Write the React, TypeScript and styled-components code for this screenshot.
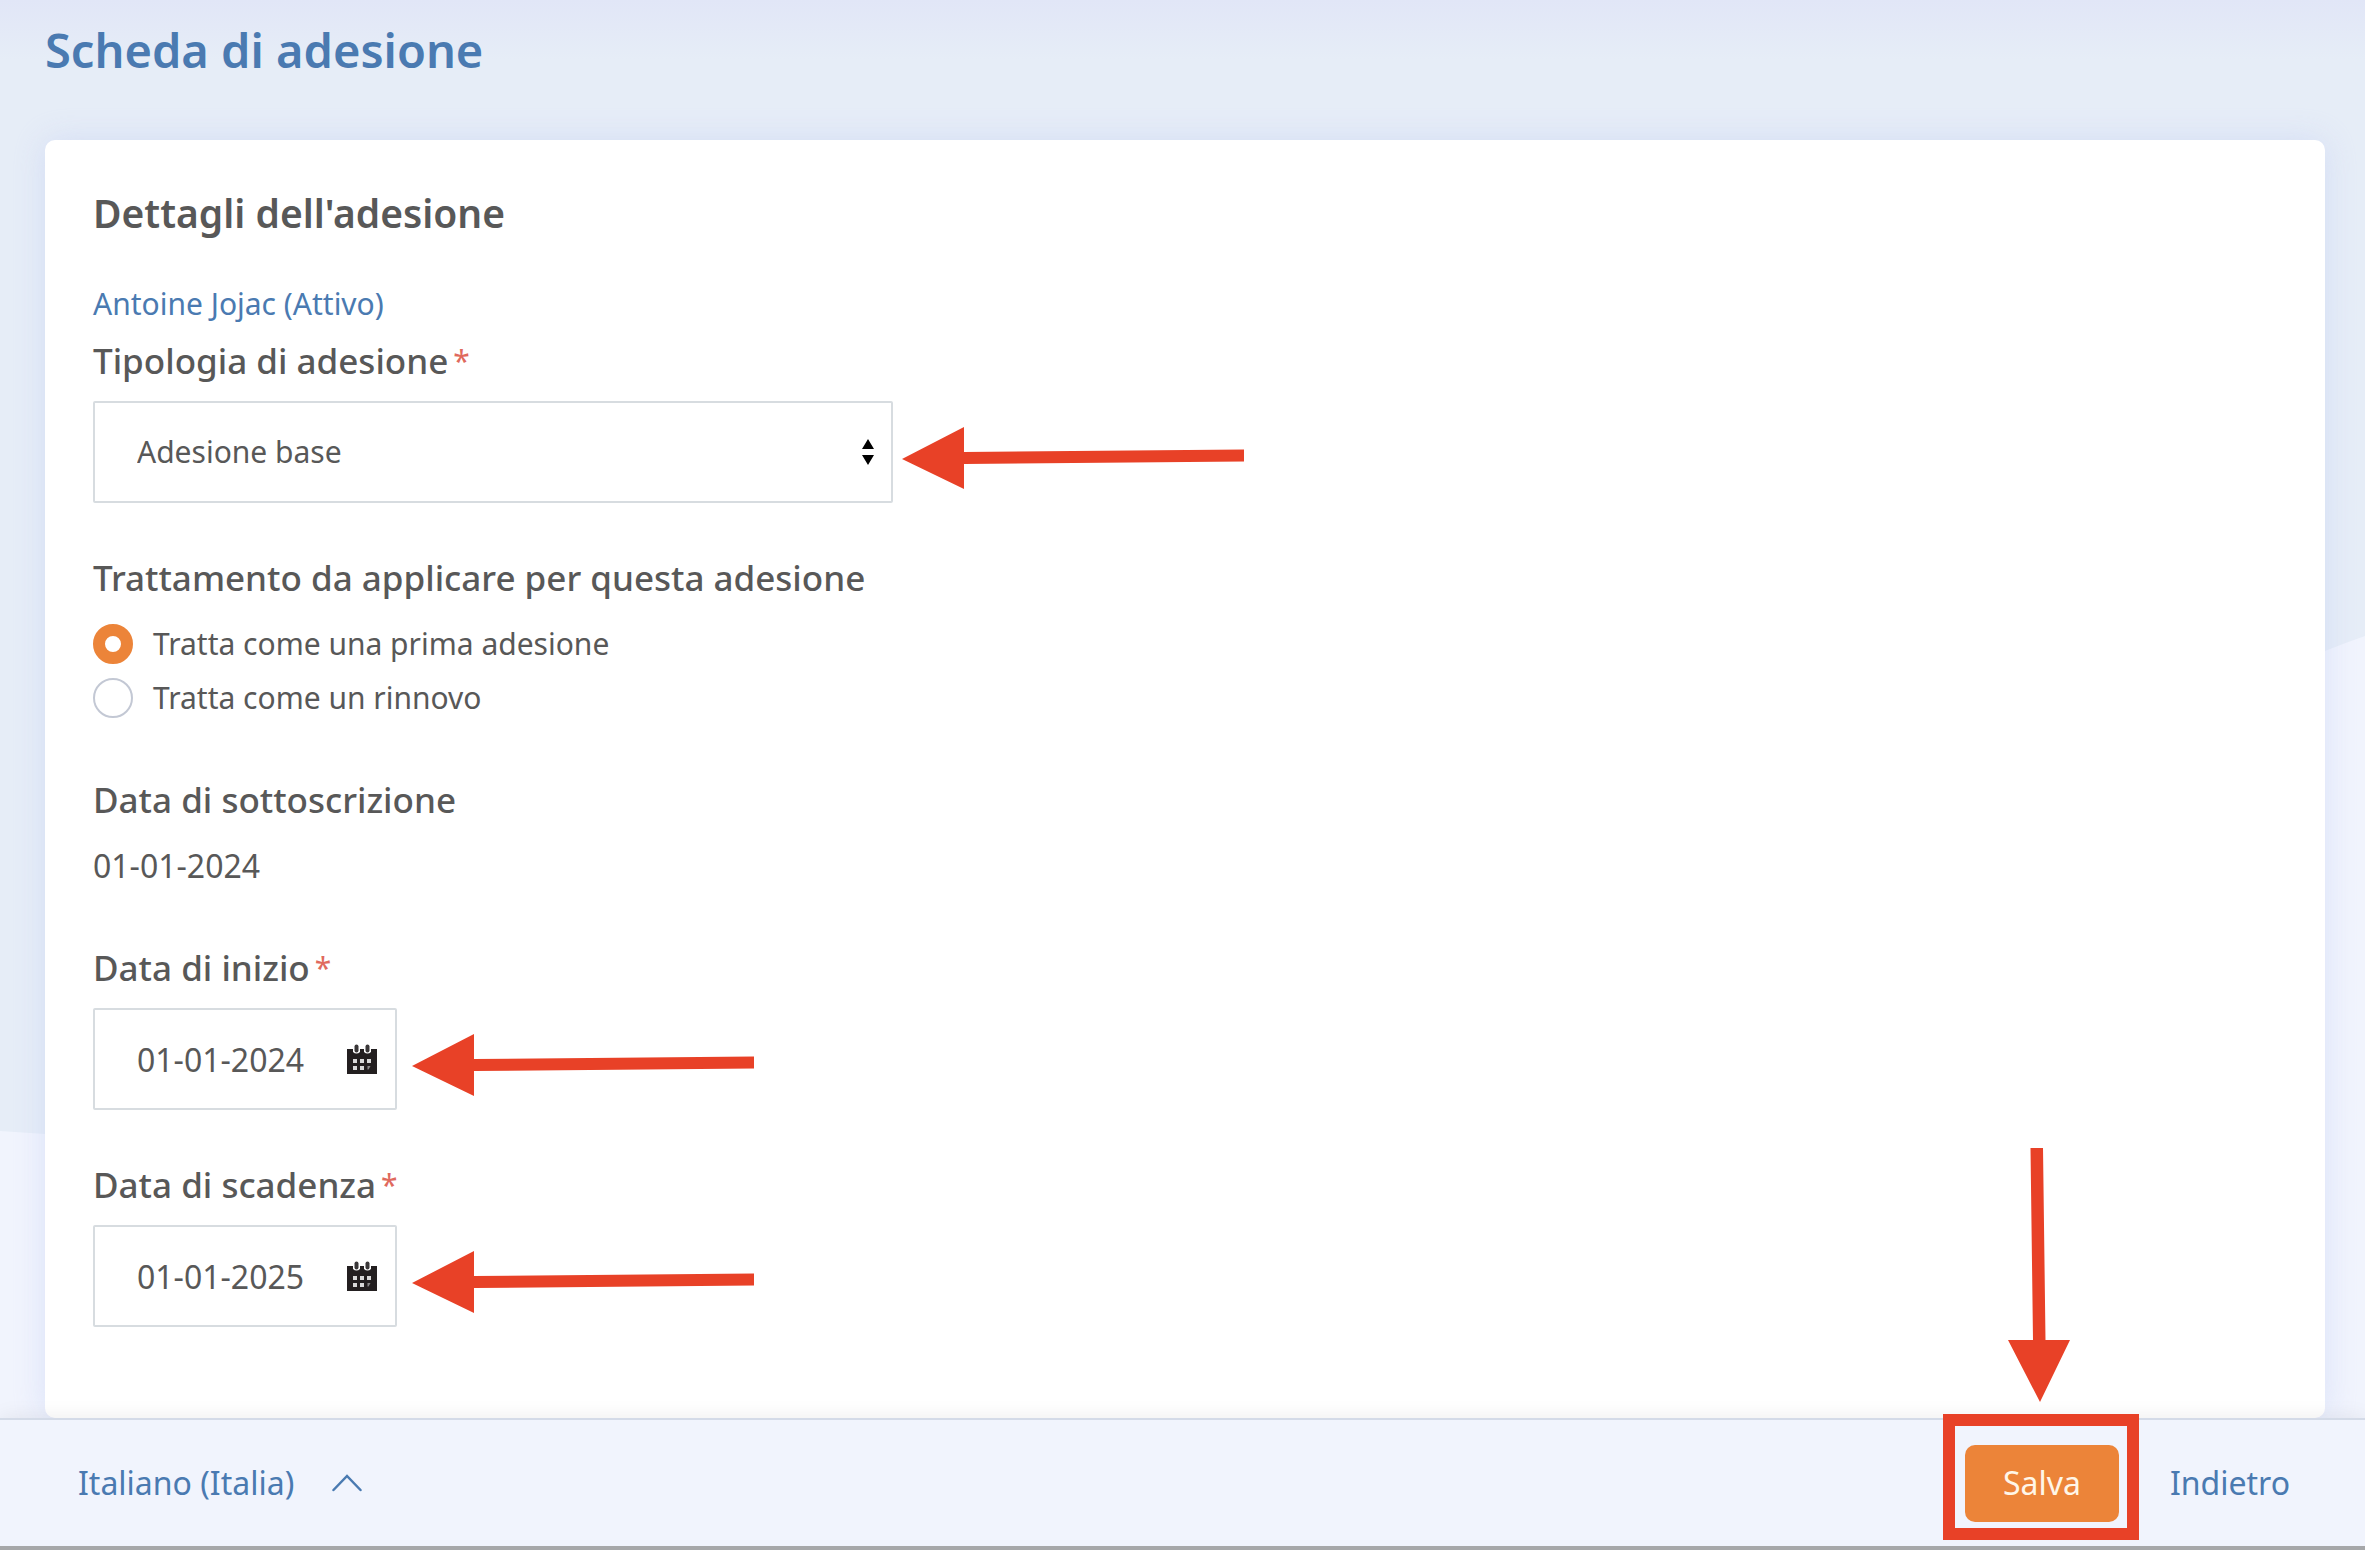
import React, { useState } from 'react';
import styled, { createGlobalStyle } from 'styled-components';

const GlobalStyle = createGlobalStyle`
  *, *::before, *::after { box-sizing: border-box; }
  body {
    margin: 0;
    background: #f1f4fd;
    color: #585858;
    font-family: "Noto Sans", "Open Sans", sans-serif;
    font-size: 30px;
    line-height: 40px;
  }
  button, input, select { font: inherit; color: inherit; }
`;

const Page = styled.div`
  position: relative;
  isolation: isolate;
  display: flex;
  flex-direction: column;
  min-height: 100vh;
`;

const Backdrop = styled.svg`
  position: absolute;
  inset: 0;
  z-index: -1;
  width: 100%;
  height: 100%;
`;

const PageHeader = styled.header`
  padding: 20px 45px 60px;
  background: linear-gradient(#e1e6f7, rgba(225, 230, 247, 0) 60px);
`;

const PageTitle = styled.h1`
  margin: 0;
  font-size: 47px;
  line-height: 60px;
  font-weight: 600;
  color: #4a7ab1;
`;

const Main = styled.main`
  display: flex;
  flex: 1;
  padding: 0 40px 0 45px;
`;

const Card = styled.form`
  flex: 1;
  padding: 49px 48px 80px;
  border-radius: 10px;
  background: #ffffff;
  box-shadow: 0 0 32px rgba(190, 202, 245, 0.45);
`;

const CardTitle = styled.h2`
  margin: 0 0 47px;
  font-size: 39px;
  line-height: 48px;
  font-weight: 600;
`;

const TextLink = styled.a`
  color: #4a7ab1;
  text-decoration: none;
`;

const Fields = styled.div`
  display: flex;
  flex-direction: column;
  gap: 53px;
  margin-top: 15px;
`;

const Field = styled.div`
  display: flex;
  flex-direction: column;
  align-items: flex-start;
  gap: 18px;
`;

const Group = styled.div`
  display: flex;
  flex-direction: column;
  gap: 24px;
  padding-bottom: 7px;
`;

const Label = styled.label`
  font-size: 35px;
  line-height: 44px;
  font-weight: 500;
`;

const GroupLabel = styled.div`
  font-size: 35px;
  line-height: 44px;
  font-weight: 500;
`;

const Required = styled.span`
  margin-left: 5px;
  vertical-align: 2px;
  font-size: 30px;
  line-height: 30px;
  font-weight: 400;
  color: #e0695d;
`;

const ControlRow = styled.div`
  display: flex;
  align-items: center;
  gap: 9px;
  max-width: 100%;
`;

const DateRow = styled(ControlRow)`
  gap: 15px;
`;

const Control = styled.div<{ $width: number }>`
  display: flex;
  align-items: center;
  position: relative;
  width: ${({ $width }) => $width}px;
  height: 102px;
  border: 2px solid #d7dce0;
  border-radius: 2px;
  background: #ffffff;
`;

const Select = styled.select`
  appearance: none;
  width: 100%;
  height: 100%;
  padding: 0 60px 0 42px;
  border: 0;
  background: transparent;
`;

const SelectArrows = styled.svg`
  position: absolute;
  right: 17px;
  width: 12px;
  height: 26px;
  pointer-events: none;
`;

const DateValue = styled.div`
  font-size: 32px;
`;

const DateInput = styled.input`
  flex: 1;
  min-width: 0;
  height: 100%;
  padding: 0 0 0 42px;
  border: 0;
  background: transparent;
  font-size: 32px;
`;

const CalendarButton = styled.button`
  display: flex;
  margin-right: 18px;
  padding: 0;
  border: 0;
  background: transparent;
`;

const Options = styled.div`
  display: flex;
  flex-direction: column;
  gap: 14px;
`;

const Option = styled.label`
  display: flex;
  align-items: center;
  gap: 20px;
`;

const Radio = styled.input`
  appearance: none;
  width: 40px;
  height: 40px;
  margin: 0;
  border: 2px solid #c3c8d4;
  border-radius: 50%;
  background: #ffffff;

  &:checked { border: 12px solid #ec8439; }
`;

const Pointer = styled.svg`
  margin-top: 12px;
`;

const Footer = styled.footer`
  position: sticky;
  bottom: 0;
  display: flex;
  align-items: center;
  justify-content: space-between;
  height: 132px;
  padding: 0 75px 0 78px;
  border-top: 2px solid #d4dbe8;
  border-bottom: 4px solid #a6a7a9;
  background: #f1f4fd;
  box-shadow: 0 0 20px rgba(0, 0, 0, 0.08);
  font-size: 32px;
`;

const LanguageButton = styled.button`
  display: flex;
  align-items: center;
  gap: 38px;
  padding: 0;
  border: 0;
  background: transparent;
  color: #4a7ab1;
`;

const Actions = styled.div`
  display: flex;
  align-items: center;
  gap: 51px;
`;

const SaveSpot = styled.div`
  position: relative;
`;

const SaveButton = styled.button`
  display: block;
  width: 154px;
  height: 77px;
  padding: 0;
  border: 0;
  border-radius: 10px;
  background: #ec8439;
  color: #fff6e8;
`;

const Highlight = styled.div`
  position: absolute;
  inset: -31px -20px -18px -22px;
  border: 12px solid #e84127;
  pointer-events: none;
`;

const DownArrow = styled.svg`
  position: absolute;
  bottom: 120px;
  left: 43px;
  pointer-events: none;
`;

const PointLeft = () => (
  <Pointer width="342" height="62" viewBox="0 0 342 62" fill="#e84127" aria-hidden="true">
    <path d="M0 32L62 0V25L342 22.500V34.500L62 37V62Z" />
  </Pointer>
);

const CalendarIcon = () => (
  <svg width="30" height="30" viewBox="0 0 30 30" aria-hidden="true">
    <path d="M0 5H6V8Q9.500 11 13 8V5H17V8Q20.500 11 24 8V5H30V30H0Z" fill="#231f20" />
    <rect x="7.500" y="0.500" width="4" height="8" rx="2" fill="#3a3738" />
    <rect x="18.500" y="0.500" width="4" height="8" rx="2" fill="#3a3738" />
    <path d="M6 15h4v4H6zM13 15h4v4h-4zM20 15h4v4h-4zM6 22h4v4H6zM13 22h4v4h-4z" fill="#d9d9d9" />
    <path d="M20.500 22h3l-2 3.500h-1z" fill="#8b898a" />
  </svg>
);

type DateFieldProps = { id: string; label: string; initial: string };

function DateField({ id, label, initial }: DateFieldProps) {
  const [value, setValue] = useState(initial);
  return (
    <Field>
      <Label htmlFor={id}>{label}<Required>*</Required></Label>
      <DateRow>
        <Control $width={304}>
          <DateInput id={id} value={value} onChange={(e) => setValue(e.target.value)} />
          <CalendarButton type="button" aria-label={label}><CalendarIcon /></CalendarButton>
        </Control>
        <PointLeft />
      </DateRow>
    </Field>
  );
}

export default function App() {
  return (
    <>
      <GlobalStyle />
      <Page>
        <Backdrop viewBox="0 0 2365 1550" preserveAspectRatio="none" aria-hidden="true">
          <path d="M0 0H2365V636Q2325 650 2285 668Q1300 1230 45 1134L0 1131Z" fill="#e6edf7" />
        </Backdrop>
        <PageHeader>
          <PageTitle>Scheda di adesione</PageTitle>
        </PageHeader>
        <Main>
          <Card id="membership">
            <CardTitle>Dettagli dell'adesione</CardTitle>
            <TextLink href="#member">Antoine Jojac (Attivo)</TextLink>
            <Fields>
              <Field>
                <Label htmlFor="type">Tipologia di adesione<Required>*</Required></Label>
                <ControlRow>
                  <Control $width={800}>
                    <Select id="type" defaultValue="base">
                      <option value="base">Adesione base</option>
                    </Select>
                    <SelectArrows viewBox="0 0 12 26" aria-hidden="true">
                      <path d="M6 0L12 10H0ZM6 26L0 16H12Z" fill="#000000" />
                    </SelectArrows>
                  </Control>
                  <PointLeft />
                </ControlRow>
              </Field>
              <Group role="radiogroup" aria-labelledby="treatment">
                <GroupLabel id="treatment">Trattamento da applicare per questa adesione</GroupLabel>
                <Options>
                  <Option><Radio type="radio" name="treatment" defaultChecked />Tratta come una prima adesione</Option>
                  <Option><Radio type="radio" name="treatment" />Tratta come un rinnovo</Option>
                </Options>
              </Group>
              <Group>
                <GroupLabel>Data di sottoscrizione</GroupLabel>
                <DateValue>01-01-2024</DateValue>
              </Group>
              <DateField id="start" label="Data di inizio" initial="01-01-2024" />
              <DateField id="end" label="Data di scadenza" initial="01-01-2025" />
            </Fields>
          </Card>
        </Main>
        <Footer>
          <LanguageButton type="button">
            Italiano (Italia)
            <svg width="30" height="18" viewBox="0 0 30 18" fill="none" stroke="#4a7ab1" strokeWidth="2.500" strokeLinecap="round" aria-hidden="true">
              <path d="M1.500 16L15 2L28.500 16" />
            </svg>
          </LanguageButton>
          <Actions>
            <SaveSpot>
              <SaveButton type="submit" form="membership">Salva</SaveButton>
              <Highlight />
              <DownArrow width="62" height="254" viewBox="0 0 62 254" fill="#e84127" aria-hidden="true">
                <path d="M22.500 0H35L37.500 192H62L32 254L0 192H25Z" />
              </DownArrow>
            </SaveSpot>
            <TextLink href="#back">Indietro</TextLink>
          </Actions>
        </Footer>
      </Page>
    </>
  );
}
